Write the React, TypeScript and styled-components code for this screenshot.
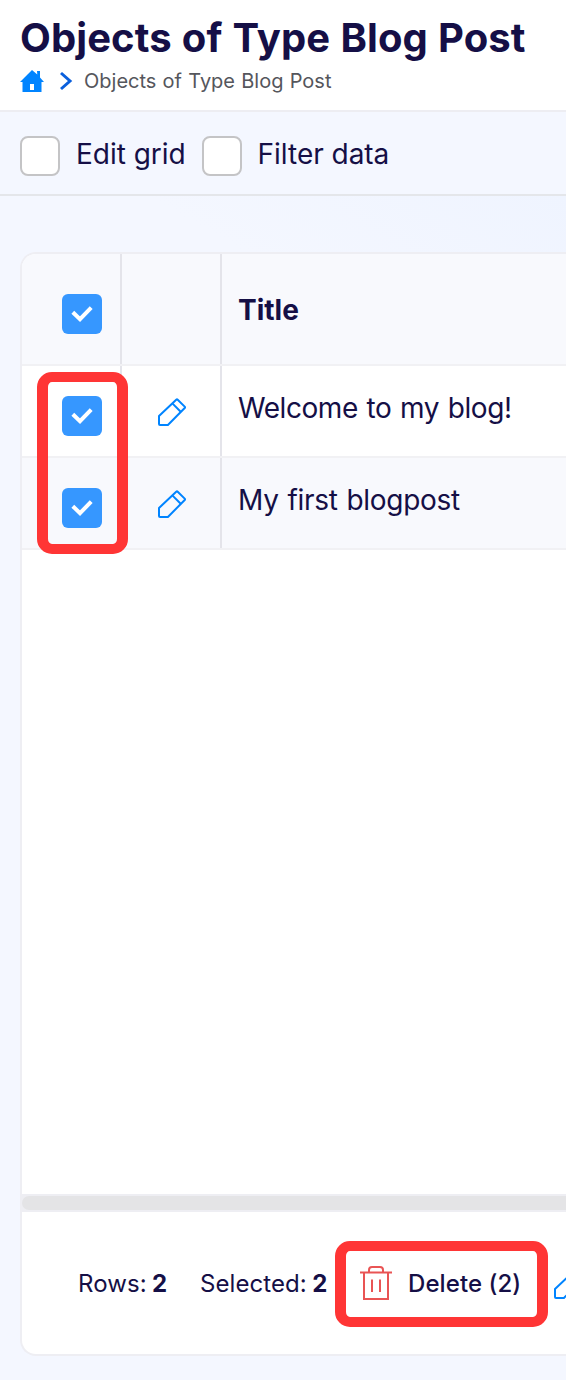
import React from 'react';
import styled, { createGlobalStyle } from 'styled-components';

const Global = createGlobalStyle`
  *, *::before, *::after { box-sizing: border-box; }
  html, body { margin: 0; padding: 0; overflow: hidden; }
  body {
    font-family: Inter, "Liberation Sans", sans-serif;
    color: #150f46;
    background: #f4f7ff;
  }
`;

const Page = styled.main`
  width: 100%;
  height: 1380px;
  display: flex;
  flex-direction: column;
  overflow: hidden;
  background: #f4f7ff;
`;

const Header = styled.header`
  height: 112px;
  padding: 13px 20px 0;
  background: #fff;
  border-bottom: 2px solid #ededf2;
`;

const Heading = styled.h1`
  margin: 0;
  font-size: 40px;
  line-height: 50px;
  font-weight: 700;
  letter-spacing: 0.09px;
  word-spacing: 0.6px;
  white-space: nowrap;
`;

const Breadcrumb = styled.nav`
  height: 36px;
  display: flex;
  align-items: center;
  font-size: 20px;
  letter-spacing: 0;
  word-spacing: 0.6px;
  color: #55565c;
  white-space: nowrap;
`;

const HomeIcon = styled.svg`
  width: 24px;
  height: 24px;
  margin-right: 15px;
`;

const ChevronIcon = styled.svg`
  width: 14px;
  height: 20px;
  margin-right: 11px;
`;

const Toolbar = styled.div`
  height: 84px;
  display: flex;
  align-items: center;
  padding: 6px 20px 0;
  gap: 16px;
  border-bottom: 2px solid #e4e6ea;
`;

const Option = styled.label`
  display: flex;
  align-items: center;
  gap: 16px;
  font-size: 28px;
  font-weight: 400;
  line-height: 40px;
  letter-spacing: -0.03px;
  white-space: nowrap;
`;

const OptionText = styled.span`
  margin-top: -4px;
`;

const EmptyBox = styled.span`
  width: 40px;
  height: 40px;
  border: 2px solid #c4c4c6;
  border-radius: 8px;
  background: #fff;
`;

const Content = styled.section`
  flex: 1;
  padding: 56px 0 24px 20px;
  background: linear-gradient(30deg, #f4f7ff 84%, #eff4ff 100%);
`;

const Card = styled.div`
  position: relative;
  height: 1104px;
  display: flex;
  flex-direction: column;
  border: 2px solid #eeeef3;
  border-right: 0;
  border-radius: 16px 0 0 16px;
  background: #fff;
`;

const Row = styled.div<{ $head?: boolean; $shade?: boolean }>`
  display: grid;
  grid-template-columns: 100px 100px 1fr;
  height: ${(p) => (p.$head ? 112 : 92)}px;
  border-bottom: 2px solid #f1f1f4;
  border-radius: ${(p) => (p.$head ? '14px 0 0 0' : '0')};
  background: ${(p) => (p.$head || p.$shade ? '#f8f9fd' : '#fff')};
  font-size: 28px;
  font-weight: ${(p) => (p.$head ? 700 : 400)};
`;

const Cell = styled.div<{ $line?: boolean }>`
  display: flex;
  align-items: center;
  border-right: ${(p) => (p.$line === false ? '0' : '2px solid #e4e4ea')};
`;

const CheckCell = styled(Cell)`
  padding: 10px 0 0 40px;
`;

const EditCell = styled(Cell)`
  padding: 3px 0 0 35px;
`;

const TextCell = styled(Cell)<{ $tracking?: number }>`
  padding: 0 0 6px 16px;
  border-right: 0;
  letter-spacing: ${(p) => p.$tracking ?? 0}px;
  word-spacing: 1.3px;
  white-space: nowrap;
`;

const HeadTextCell = styled(TextCell)`
  padding-bottom: 0;
  padding-top: 2px;
`;

const Checked = styled.span`
  width: 40px;
  height: 40px;
  border-radius: 6px;
  background: #3697ff;

  svg {
    display: block;
  }
`;

const Rows = styled.div`
  flex: 1;
`;

const ScrollTrack = styled.div`
  height: 18px;
  padding: 2px 0;
  background: #eeeef3;
`;

const ScrollThumb = styled.div`
  height: 14px;
  border-radius: 7px 0 0 7px;
  background: #e4e4e6;
`;

const Footer = styled.footer`
  height: 142px;
  display: flex;
  align-items: center;
  padding-left: 56px;
  font-size: 24px;
  letter-spacing: 0.07px;
  white-space: nowrap;
  overflow: hidden;
`;

const Stat = styled.span<{ $width: number }>`
  width: ${(p) => p.$width}px;
  flex: none;
  word-spacing: -1.4px;

  b {
    letter-spacing: 0;
  }
`;

const DeleteButton = styled.button`
  display: flex;
  align-items: center;
  gap: 16px;
  width: 193px;
  flex: none;
  padding: 0;
  border: 0;
  background: none;
  color: inherit;
  font: inherit;
  font-weight: 500;
  letter-spacing: 0.08px;
`;

const FooterEdit = styled.span`
  flex: none;
  margin-top: 5px;
`;

const Highlight = styled.div<{ $x: number; $y: number; $w: number; $h: number }>`
  position: absolute;
  left: ${(p) => p.$x}px;
  top: ${(p) => p.$y}px;
  width: ${(p) => p.$w}px;
  height: ${(p) => p.$h}px;
  border: solid #ff3535;
  border-width: 10px 11px;
  border-radius: 15px;
  pointer-events: none;
`;

const PencilSvg = styled.svg`
  display: block;
  width: 29px;
  height: 29px;
`;

function Check() {
  return (
    <Checked>
      <svg width="40" height="40" viewBox="0 0 40 40" fill="none">
        <path d="M10.8 18.2 L18 25.2 L29.2 13.6" stroke="#fff" strokeWidth="4" />
      </svg>
    </Checked>
  );
}

function Pencil() {
  return (
    <PencilSvg viewBox="0 0 29 29" fill="none" stroke="#0084ff" strokeWidth="2" strokeLinejoin="round">
      <path d="M2 18 L19.2 1.7 Q20 1 20.7 1.7 L27.7 8.6 Q28.3 9.3 27.7 10 L10.9 27 H3 Q2 27 2 26 Z" />
      <path d="M15.6 5.6 L23.7 13.8" />
    </PencilSvg>
  );
}

function Trash() {
  return (
    <svg width="32" height="36" viewBox="0 0 32 36" fill="none" stroke="#e95454" strokeWidth="2">
      <path d="M0 7.5 H32 M4 7.5 V34 H28 V7.5" />
      <path d="M9 7.5 V5 Q9 2 12 2 H20 Q23 2 23 5 V7.5 M12 14.5 V27 M20 14.5 V27" />
    </svg>
  );
}

type DataRowProps = { title: string; tracking: number; shade?: boolean; line?: boolean };

function DataRow({ title, tracking, shade, line }: DataRowProps) {
  return (
    <Row $shade={shade}>
      <CheckCell $line={line}><Check /></CheckCell>
      <EditCell><Pencil /></EditCell>
      <TextCell $tracking={tracking}>{title}</TextCell>
    </Row>
  );
}

export default function App() {
  return (
    <>
      <Global />
      <Page>
        <Header>
          <Heading>Objects of Type Blog Post</Heading>
          <Breadcrumb>
            <HomeIcon viewBox="0 0 24 24" fill="#0084ff" fillRule="evenodd">
              <path d="M12 1 L17.3 5.6 L17 2 H20 V8.5 L24 13 H21.5 V23 H2.5 V13 H0 Z M10 15 V21 H14 V15 Z" />
            </HomeIcon>
            <ChevronIcon viewBox="0 0 14 20" fill="none" stroke="#0a5fdc" strokeWidth="3">
              <path d="M2 2 L11 10 L2 18" />
            </ChevronIcon>
            <span>Objects of Type Blog Post</span>
          </Breadcrumb>
        </Header>
        <Toolbar>
          <Option><EmptyBox /><OptionText>Edit grid</OptionText></Option>
          <Option><EmptyBox /><OptionText>Filter data</OptionText></Option>
        </Toolbar>
        <Content>
          <Card>
            <Row $head>
              <CheckCell><Check /></CheckCell>
              <Cell />
              <HeadTextCell>Title</HeadTextCell>
            </Row>
            <Rows>
              <DataRow title="Welcome to my blog!" tracking={-0.44} />
              <DataRow title="My first blogpost" tracking={-0.3} shade line={false} />
            </Rows>
            <ScrollTrack><ScrollThumb /></ScrollTrack>
            <Footer>
              <Stat $width={122}>Rows: <b>2</b></Stat>
              <Stat $width={160}>Selected: <b>2</b></Stat>
              <DeleteButton><Trash />Delete (2)</DeleteButton>
              <FooterEdit><Pencil /></FooterEdit>
            </Footer>
            <Highlight $x={15} $y={118} $w={91} $h={182} />
            <Highlight $x={313} $y={987} $w={213} $h={86} />
          </Card>
        </Content>
      </Page>
    </>
  );
}
